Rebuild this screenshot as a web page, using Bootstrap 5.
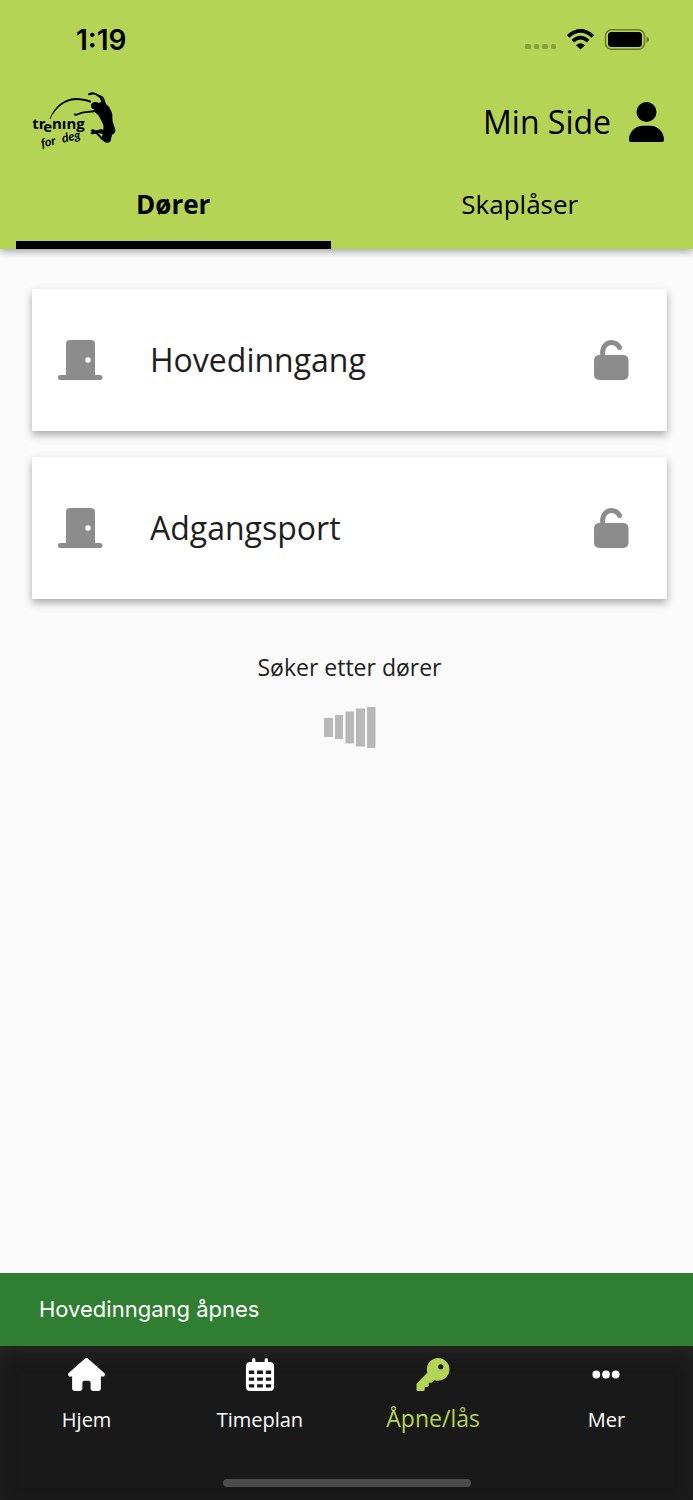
<!DOCTYPE html>
<html lang="no">
<head>
<meta charset="utf-8">
<meta name="viewport" content="width=device-width, initial-scale=1">
<title>Trening for deg</title>
<link href="https://cdn.jsdelivr.net/npm/bootstrap@5.3.0/dist/css/bootstrap.min.css" rel="stylesheet">
<style>
  body { font-family: "Open Sans", sans-serif; background: #fafafa; color: #1e1e1e; }
  svg { display: block; flex: none; }
  .app-head { background: #b5d354; color: #000; box-shadow: 0 2px 8px rgba(0,0,0,.4); }
  .status-row { height: 80px; padding: 0 44px 0 76px; }
  .clock { font: 600 28px/32px Inter, sans-serif; }
  .brand-row { height: 84px; padding: 0 29px 0 25px; }
  .my-page { font-size: 32px; line-height: 40px; gap: 18px; }
  .tab-btn { height: 85px; padding: 4px 0 0; border: 0; border-bottom: 8px solid transparent; background: none; color: #000; font-size: 26px; }
  .tab-btn.active { font-weight: 700; border-bottom-color: #000; }
  .door-list { padding: 40px 26px 0 32px; gap: 26px; }
  .door-card { height: 142px; padding: 0 38px 0 26px; border: 0; background: #fff; color: #1e1e1e; font-size: 32px; box-shadow: 0 4px 8px rgba(0,0,0,.32); }
  .door-name { margin-left: 47px; }
  .door-card svg { fill: #8c8c8c; }
  .searching { margin-top: 26px; font-size: 23px; line-height: 32px; gap: 24px; }
  .toast-line { height: 73px; padding: 0 39px 2px; background: #2f7e32; color: #fff; font: 400 22px/32px Inter, sans-serif; }
  .bottom-bar { background: #191919; box-shadow: inset 0 8px 20px -4px #282828; }
  .bottom-bar a { color: #fff; font-size: 20px; line-height: 28px; padding-top: 12px; gap: 15px; }
  .bottom-bar a svg { fill: currentColor; height: 33px; }
  .bottom-bar a.active { color: #b5d354; font-size: 23px; gap: 13px; }
  .home-line { width: 248px; height: 8px; background: #4c4c4c; margin: 45px auto 13px; }
</style>
</head>
<body class="d-flex flex-column min-vh-100">
<header class="app-head">
  <div class="status-row d-flex align-items-center justify-content-between">
    <span class="clock">1:19</span>
    <svg width="124" height="24" viewBox="0 0 124 24">
      <g fill="#000" opacity=".25"><rect x="0" y="16" width="6" height="5" rx="1.5"/><rect x="9" y="16" width="5" height="5" rx="1.5"/><rect x="17" y="16" width="6" height="5" rx="1.5"/><rect x="26" y="16" width="5" height="5" rx="1.5"/></g>
      <g fill="none" stroke="#000" stroke-width="3.6"><path d="M43.200 8.300Q55.500 -2.500 67.800 8.300"/><path d="M47.800 13.200Q55.500 6.200 63.200 13.200"/></g>
      <path d="M51 17.200Q55.500 13.400 60 17.200L55.500 21.500z"/>
      <rect x="80.500" y="1.700" width="39" height="19.600" rx="6" fill="none" stroke="#000" stroke-opacity=".42" stroke-width="1.500"/>
      <rect x="83" y="4" width="34" height="15" rx="3.500"/>
      <path d="M121.500 8.500q2.500 1 2.500 3t-2.500 3z" opacity=".45"/>
    </svg>
  </div>
  <div class="brand-row d-flex align-items-center justify-content-between">
    <svg width="100" height="75" viewBox="0 0 300 225" role="img" aria-label="Trening for deg">
      <path d="M74 101C88 64 119 40 151 39c17 0 32 3 47 8l-1 6c-15-5-29-8-45-8-31 1-60 22-76 57z"/>
      <g transform="translate(135 15)">
        <path d="M54 15Q53 9 64 7Q72 7 78 10L97 19Q103 23 104 30L108 42Q119 50 123 62Q128 70 127 82L128 95L136 119Q138 129 126 134L122 152Q119 160 108 158Q100 154 92 146L78 131L66 133Q60 132 62 128L67 126Q61 125 62 121Q66 116 73 119Q80 123 92 117L100 119Q103 108 97 98L91 86L84 74L74 67L40 70L18 77Q14 79 11 73Q12 69 20 71L36 65L72 61Q82 58 90 44L94 36L90 25L76 14Q66 13 58 16z"/>
        <ellipse cx="76" cy="47" rx="13" ry="11"/><path d="M76 42L103 34L108 60L84 70L72 62z"/>
        <path d="M84 129l12 12 2-9z" fill="#b5d354"/>
      </g>
      <g font-family="Open Sans" font-weight="700" font-size="45"><text x="22" y="132">tr</text><text x="55" y="140">e</text><text x="81" y="132">nıng</text></g>
      <g transform="translate(51 188) rotate(-13)" font-family="Lato" font-style="italic" font-weight="700" font-size="37"><text x="0" y="0">for</text><text x="64" y="0">deg</text></g>
    </svg>
    <a href="#" class="my-page d-flex align-items-center text-black text-decoration-none">Min Side
      <svg width="35" height="40" viewBox="0 0 448 512"><path d="M224 256A128 128 0 1 0 224 0a128 128 0 1 0 0 256zm-45.700 48C79.800 304 0 383.800 0 482.300C0 498.700 13.300 512 29.700 512H418.300c16.400 0 29.700-13.300 29.700-29.700C448 383.800 368.200 304 269.700 304H178.300z"/></svg>
    </a>
  </div>
  <div class="row g-0" role="tablist">
    <div class="col-6 px-3"><button class="tab-btn active w-100" role="tab" aria-selected="true">Dører</button></div>
    <div class="col-6 px-3"><button class="tab-btn w-100" role="tab" aria-selected="false">Skaplåser</button></div>
  </div>
</header>

<svg width="0" height="0" class="position-absolute" aria-hidden="true">
  <symbol id="door" viewBox="0 0 45 40"><path fill-rule="evenodd" d="M12 0h21q4 0 4 4v31h5.500q2 0 2 2.500T42.500 40h-40Q0 40 0 37.500T2.500 35H8V4q0-4 4-4zM30 17.300a2.700 2.700 0 1 0 0 5.400a2.700 2.700 0 1 0 0-5.400z"/></symbol>
  <symbol id="unlock" viewBox="0 0 35 40"><rect y="15" width="34.500" height="25" rx="5"/><path d="M8.700 17v-5.500C9 6 13 2.500 17.500 2.500c3.800 0 6.300 2 8 5" fill="none" stroke="#8c8c8c" stroke-width="5" stroke-linecap="round"/></symbol>
</svg>

<main class="flex-grow-1">
  <div class="door-list d-flex flex-column">
    <button class="door-card d-flex align-items-center text-start">
      <svg width="45" height="40"><use href="#door"/></svg><span class="door-name flex-grow-1">Hovedinngang</span><svg width="35" height="40"><use href="#unlock"/></svg>
    </button>
    <button class="door-card d-flex align-items-center text-start">
      <svg width="45" height="40"><use href="#door"/></svg><span class="door-name flex-grow-1">Adgangsport</span><svg width="35" height="40"><use href="#unlock"/></svg>
    </button>
    <div class="searching d-flex flex-column align-items-center" role="status">
      <span>Søker etter dører</span>
      <svg width="52" height="41" viewBox="0 0 52 41" fill="#b8b8b8"><path d="M0 11h9v19H0zM11 8h8v24h-8zM21.500 4.500h8.500v32h-8.500zM32 1.500h9v38h-9zM43 0h8.500v41H43z"/></svg>
    </div>
  </div>
</main>

<div class="toast-line d-flex align-items-center" role="alert">Hovedinngang åpnes</div>
<nav class="bottom-bar">
  <div class="row g-0">
    <a href="#" class="col-3 d-flex flex-column align-items-center text-decoration-none">
      <svg width="37" viewBox="0 0 576 512"><path d="M575.800 255.500c0 18-15 32.100-32 32.100h-32l.7 160.200c0 2.700-.2 5.400-.5 8.100V472c0 22.100-17.900 40-40 40H392c-22.100 0-40-17.900-40-40V384c0-17.700-14.300-32-32-32H256c-17.700 0-32 14.300-32 32v88c0 22.100-17.900 40-40 40H104c-22.100 0-40-17.900-40-40V287.600H32c-18 0-32-14-32-32.100c0-9 3-17 10-24L266.400 8c7-7 15-8 22-8s15 2 21 7L564.800 231.500c8 7 12 15 11 24z"/></svg>
      <span>Hjem</span></a>
    <a href="#" class="col-3 d-flex flex-column align-items-center text-decoration-none">
      <svg width="30" viewBox="0 0 30 34"><path fill-rule="evenodd" d="M8.500 0q1.700 0 1.700 1.700V4h9.600V1.700q0-1.700 1.700-1.700t1.700 1.700V4H25q4.500 0 4.500 4.500v21q0 4.500-4.500 4.500H5Q.5 34 .5 29.500v-21Q.5 4 5 4h1.800V1.700Q6.800 0 8.500 0zM3.500 13v3.500H9V13zM12 13v3.500h6V13zM21 13v3.500h5.500V13zM3.500 20v3.500H9V20zM12 20v3.500h6V20zM21 20v3.500h5.500V20zM3.500 27v2q0 1.500 1.500 1.500h4V27zM12 27v3.500h6V27zM21 27v3.500h4q1.500 0 1.500-1.500v-2z"/></svg>
      <span>Timeplan</span></a>
    <a href="#" class="active col-3 d-flex flex-column align-items-center text-decoration-none" aria-current="page">
      <svg width="34" viewBox="0 0 512 512"><path d="M336 352c97.200 0 176-78.800 176-176S433.200 0 336 0S160 78.800 160 176c0 18.700 2.900 36.800 8.300 53.700L7 391c-4.500 4.500-7 10.600-7 17v80c0 13.300 10.700 24 24 24h80c13.300 0 24-10.700 24-24V448h40c13.300 0 24-10.700 24-24V384h40c6.400 0 12.500-2.500 17-7l33.300-33.300c16.900 5.400 35 8.300 53.700 8.300zM376 96a40 40 0 1 1 0 80 40 40 0 1 1 0-80z"/></svg>
      <span>Åpne/lås</span></a>
    <a href="#" class="col-3 d-flex flex-column align-items-center text-decoration-none">
      <svg width="28" viewBox="0 0 28 34"><circle cx="4" cy="17" r="4"/><circle cx="14" cy="17" r="4"/><circle cx="24" cy="17" r="4"/></svg>
      <span>Mer</span></a>
  </div>
  <div class="home-line rounded-pill"></div>
</nav>
<script src="https://cdn.jsdelivr.net/npm/bootstrap@5.3.0/dist/js/bootstrap.bundle.min.js"></script>
</body>
</html>
